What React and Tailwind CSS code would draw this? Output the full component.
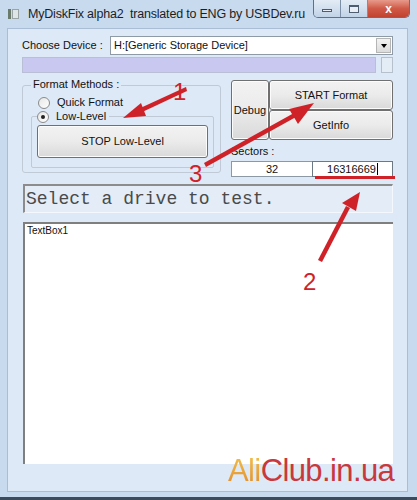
import React from "react";

const ui = { fontFamily: '"Liberation Sans", Arial, sans-serif' };

function Btn({ className = "", children }) {
  return (
    <div
      className={
        "flex items-center justify-center border border-[#707070] rounded-[3px] bg-gradient-to-b from-[#f2f2f2] via-[#ebebeb] to-[#d9d9d9] text-[11px] text-[#111] shadow-[inset_0_0_0_1px_#fcfcfc] " +
        className
      }
    >
      {children}
    </div>
  );
}

function Radio({ checked, label }) {
  return (
    <div className="flex items-center gap-[7px] h-[15px]">
      <div className="w-[12px] h-[12px] rounded-full border border-[#8a8a8a] bg-gradient-to-br from-[#e6e6e6] to-white flex items-center justify-center">
        {checked && <div className="w-[4px] h-[4px] rounded-full bg-[#222]" />}
      </div>
      <span className="text-[11px] text-[#111] leading-none">{label}</span>
    </div>
  );
}

export default function App() {
  return (
    <div
      className="relative w-[417px] h-[500px] bg-[#c8daee] border-b-[3px] border-b-[#3b4b5b] overflow-hidden"
      style={ui}
    >
      {/* title bar */}
      <div className="relative h-[28px] flex items-center pl-[8px]">
        <div className="w-[11px] h-[10px] flex gap-[1px] mr-[9px]">
          <div className="w-[3px] h-full bg-[#6b7b6b]" />
          <div className="flex-1 h-full bg-[#dfe6e6] border border-[#9aa4a4]" />
        </div>
        <span className="text-[12.5px] text-[#1e1e1e] whitespace-pre tracking-[-0.2px]">
          MyDiskFix alpha2  translated to ENG by USBDev.ru
        </span>
        <div className="absolute top-0 right-[7px] flex h-[18px] border border-t-0 border-[#5f7187] rounded-b-[5px] overflow-hidden">
          <div className="w-[27px] h-full bg-gradient-to-b from-[#e3ecf6] to-[#c2d3e7] border-r border-[#7d8fa6] flex items-center justify-center">
            <div className="w-[10px] h-[3px] bg-[#e9eef6] border border-[#4f5d70] mt-[3px]" />
          </div>
          <div className="w-[27px] h-full bg-gradient-to-b from-[#e3ecf6] to-[#c2d3e7] border-r border-[#7d8fa6] flex items-center justify-center">
            <div className="w-[10px] h-[8px] border border-[#4f5d70] border-t-[2px] bg-[#e9eef6]" />
          </div>
          <div className="w-[41px] h-full bg-gradient-to-b from-[#e79a8b] via-[#cf5a47] to-[#c2432f] flex items-center justify-center">
            <span className="text-white text-[12px] font-bold leading-none">x</span>
          </div>
        </div>
      </div>

      {/* client area */}
      <div className="mx-[7px] mr-[9px] h-[464px] bg-[#dde9f6] border border-[#a9bdd4] pl-[14px] pr-[14px] pt-[7px] flex flex-col">
        {/* row 1 */}
        <div className="flex items-center h-[19px]">
          <span className="w-[88px] text-[11px] text-[#111]">Choose Device :</span>
          <div className="flex-1 h-full bg-white border border-[#8e9aa6] flex items-center">
            <span className="flex-1 pl-[3px] text-[11px] text-[#111]">H:[Generic Storage Device]</span>
            <div className="w-[15px] h-[15px] mr-[1px] bg-gradient-to-b from-[#f3f3f3] to-[#dcdcdc] border border-[#b5b5b5] flex items-center justify-center">
              <div className="w-0 h-0 border-l-[3.5px] border-r-[3.5px] border-t-[4px] border-l-transparent border-r-transparent border-t-black" />
            </div>
          </div>
        </div>
        {/* row 2 */}
        <div className="flex mt-[2px] h-[16px] gap-[5px]">
          <div className="flex-1 bg-[#c8c8f0] border border-[#b9bfd4]" />
          <div className="w-[12px] bg-[#e4ecf5] border border-[#b5c0cc]" />
        </div>
        {/* row 3 */}
        <div className="flex mt-[7px] h-[96px] items-start">
          {/* group box */}
          <div className="relative mt-[5px] w-[199px] h-[88px] border border-[#c0cad6] rounded-[3px] pl-[8px] pt-[9px]">
            <span className="absolute -top-[7px] left-[8px] px-[2px] bg-[#dde9f6] text-[11px] text-[#111] leading-none">
              Format Methods :
            </span>
            <div className="pl-[7px]">
              <Radio label="Quick Format" />
            </div>
            <div className="relative mt-[6px] w-[183px] h-[52px] border border-[#c0cad6] rounded-[2px] pt-[8px] pl-[5px]">
              <div className="absolute -top-[8px] left-[5px] bg-[#dde9f6] pr-[3px]">
                <Radio checked label="Low-Level" />
              </div>
              <Btn className="w-[171px] h-[33px]">STOP Low-Level</Btn>
            </div>
          </div>
          {/* right column */}
          <div className="ml-[10px] w-[162px] flex flex-col">
            <div className="flex h-[60px]">
              <Btn className="w-[38px] h-full">Debug</Btn>
              <div className="flex-1 flex flex-col">
                <Btn className="h-[30px]">START Format</Btn>
                <Btn className="h-[30px]">GetInfo</Btn>
              </div>
            </div>
            <span className="mt-[5px] text-[11px] text-[#111] leading-[13px]">Sectors :</span>
            <div className="flex mt-[3px] h-[16px]">
              <div className="w-[81px] h-full bg-white border border-[#8c98a4] border-r-0 flex items-center justify-center text-[11px] text-[#111]">
                32
              </div>
              <div className="flex-1 h-full bg-white border border-[#6c7884] flex items-center justify-center text-[11px] text-[#111]">
                16316669<span className="w-[1px] h-[12px] bg-black ml-[1px]" />
              </div>
            </div>
          </div>
        </div>
        {/* row 4 */}
        <div className="mt-[8px] ml-[1px] h-[29px] bg-[#e3ecf7] border-t-2 border-l-2 border-[#8c8c8c] border-r border-b border-r-[#f4f7fb] border-b-[#f4f7fb] flex items-center pl-[1px]">
          <span
            className="text-[18px] text-[#4a4a4a] leading-none"
            style={{ fontFamily: '"Liberation Mono", "Courier New", monospace' }}
          >
            Select a drive to test.
          </span>
        </div>
        {/* row 5 */}
        <div className="mt-[9px] ml-[1px] h-[242px] bg-white border-t-2 border-l-2 border-[#7f7f7f] pl-[2px] pt-[1px] text-[10px] leading-[12px] text-[#111]">
          TextBox1
        </div>
      </div>

      {/* watermark */}
      <div className="absolute left-[228px] top-[455px] text-[31px] leading-none tracking-[-0.6px]">
        <span className="bg-gradient-to-b from-[#f3c24d] to-[#e08a2a] bg-clip-text text-transparent">Ali</span>
        <span className="text-[#c9383c]">Club.in.ua</span>
      </div>

      {/* annotations */}
      <svg className="absolute inset-0 pointer-events-none" width="417" height="500">
        <g fill="#cf2228" stroke="none">
          <path d="M186 87 L136 110 L138 114 L187 91 Z" />
          <path d="M123 118 L141 103 L146 116 Z" />
          <path d="M206 167 L296 117 L294 113 L204 163 Z" />
          <path d="M314 103 L289 109 L298 124 Z" />
          <path d="M322 262 L350 208 L346 206 L318 260 Z" />
          <path d="M360 192 L342 203 L356 211 Z" />
          <rect x="315" y="176" width="80" height="3" />
        </g>
        <g fill="#cf2228" style={{ font: '24px "Liberation Sans", Arial, sans-serif' }}>
          <text x="173" y="100">1</text>
          <text x="189" y="182">3</text>
          <text x="303" y="290">2</text>
        </g>
      </svg>
    </div>
  );
}
